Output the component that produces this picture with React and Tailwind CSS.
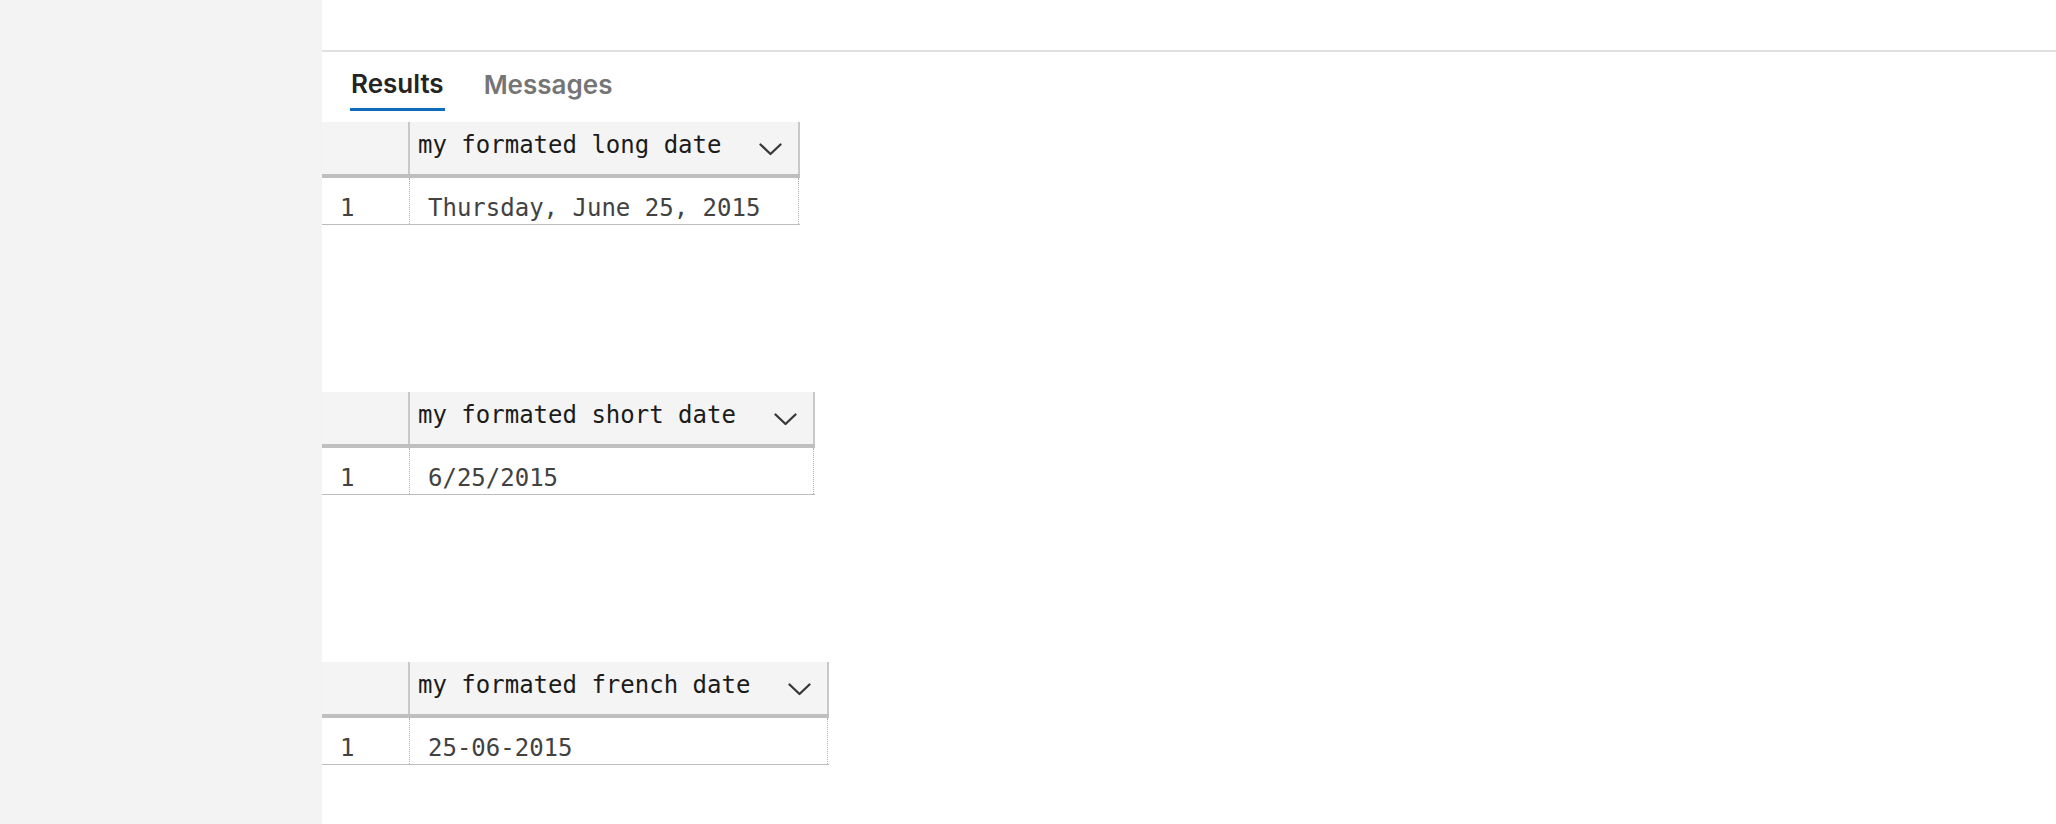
import React from "react";

function Chevron() {
  return (
    <svg width="23" height="13" viewBox="0 0 23 13" className="mt-[21px] ml-[38px] mr-[16px] shrink-0">
      <polyline points="1.5,1.5 11.5,11 21.5,1.5" fill="none" stroke="#383838" strokeWidth="2.3" strokeLinecap="round" strokeLinejoin="round" />
    </svg>
  );
}

function ResultGrid({ title, value }) {
  return (
    <div className="inline-flex flex-col font-['DejaVu_Sans_Mono',monospace]">
      <div className="flex h-[52px] bg-[#f4f4f4] border-b-4 border-[#bfbfbf] box-content">
        <div className="w-[88px] border-r-2 border-[#c8c8c8]" />
        <div className="flex items-start border-r-2 border-[#c8c8c8]">
          <span className="pl-[8px] pt-[11px] text-[24px] leading-[24px] text-[#1b1b1b] whitespace-pre">{title}</span>
          <Chevron />
        </div>
      </div>
      <div className="flex h-[46px] border-b border-[#bdbdbd] box-content">
        <div className="w-[88px] border-r border-dotted border-[#b0b0b0] pl-[18px] pt-[18px] text-[24px] leading-[24px] text-[#424242]">1</div>
        <div className="flex-1 border-r border-dotted border-[#b0b0b0] mr-[1px] pl-[18px] pt-[18px] text-[24px] leading-[24px] text-[#424242] whitespace-pre">{value}</div>
      </div>
    </div>
  );
}

export default function App() {
  return (
    <div className="flex w-[2056px] h-[824px] overflow-hidden bg-white">
      <div className="w-[322px] shrink-0 bg-[#f3f3f3]" />
      <div className="flex-1 flex flex-col">
        <div className="h-[50px] border-b-2 border-[#e0e0e0] box-content" />
        <div className="flex pl-[28px] font-['Inter',sans-serif] font-semibold text-[26px] leading-none">
          <div className="flex flex-col">
            <span className="pt-[19px] text-[#242424] px-[1px]">Results</span>
            <div className="mt-[11px] h-[3px] bg-[#0f6cbd]" />
          </div>
          <div className="flex flex-col ml-[39px]">
            <span className="pt-[20px] text-[#757575]">Messages</span>
          </div>
        </div>
        <div className="flex flex-col items-start pt-[11px] gap-[167px]">
          <ResultGrid title="my formated long date" value="Thursday, June 25, 2015" />
          <ResultGrid title="my formated short date" value="6/25/2015" />
          <ResultGrid title="my formated french date" value="25-06-2015" />
        </div>
      </div>
    </div>
  );
}
